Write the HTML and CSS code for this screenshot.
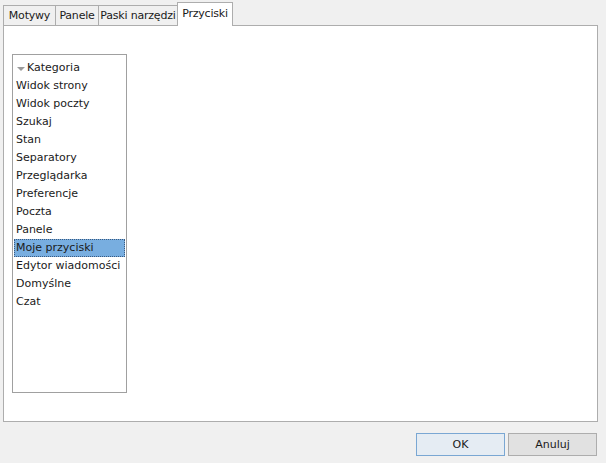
FILE: index.html
```html
<!DOCTYPE html>
<html>
<head>
<meta charset="utf-8">
<link rel="stylesheet" href="styles.css">
</head>
<body>
<div class="dialog">
  <div class="tabs">
    <div class="tab t1">Motywy</div>
    <div class="tab t2">Panele</div>
    <div class="tab t3">Paski narzędzi</div>
    <div class="tab t4 active">Przyciski</div>
  </div>
  <div class="panel">
    <div class="list">
      <div class="row head"><span class="tri"></span>Kategoria</div>
      <div class="row">Widok strony</div>
      <div class="row">Widok poczty</div>
      <div class="row">Szukaj</div>
      <div class="row">Stan</div>
      <div class="row">Separatory</div>
      <div class="row">Przeglądarka</div>
      <div class="row">Preferencje</div>
      <div class="row">Poczta</div>
      <div class="row">Panele</div>
      <div class="row sel">Moje przyciski</div>
      <div class="row">Edytor wiadomości</div>
      <div class="row">Domyślne</div>
      <div class="row">Czat</div>
    </div>
  </div>
  <div class="buttons">
    <div class="btn default">OK</div>
    <div class="btn">Anuluj</div>
  </div>
</div>
</body>
</html>
```
FILE: styles.css
```css
html, body {
  margin: 0;
  padding: 0;
  background: #f0f0f0;
  width: 606px;
  height: 463px;
  overflow: hidden;
}
.dialog {
  font-family: "DejaVu Sans", sans-serif;
  font-size: 11px;
  color: #1a1a1a;
  padding: 1px 8px 0 3px;
}
.tabs {
  display: flex;
  align-items: flex-end;
  height: 24px;
  position: relative;
  z-index: 1;
}
.tab {
  height: 20px;
  line-height: 19px;
  text-align: center;
  border: 1px solid #adadad;
  border-bottom: none;
  background: #f0f0f0;
  margin-right: -1px;
  box-sizing: border-box;
  white-space: nowrap;
  letter-spacing: -0.2px;
}
.t1 { width: 53px; }
.t2 { width: 44px; }
.t3 { width: 80px; }
.t4 { width: 56px; }
.tab.active {
  background: #fff;
  height: 24px;
  line-height: 22px;
  margin-bottom: -1px;
}
.panel {
  height: 397px;
  box-sizing: border-box;
  border: 1px solid #adadad;
  background: #fff;
  padding: 28px 0 0 8px;
}
.list {
  width: 115px;
  height: 339px;
  box-sizing: border-box;
  border: 1px solid #a0a0a0;
  padding: 4px 1px 0 1px;
}
.row {
  height: 18px;
  line-height: 18px;
  padding-left: 2px;
  white-space: nowrap;
}
.head {
  display: flex;
  align-items: center;
}
.tri {
  width: 0;
  height: 0;
  border-left: 4px solid transparent;
  border-right: 4px solid transparent;
  border-top: 4px solid #9a9a9a;
  margin: 1px 2px 0 1px;
}
.sel {
  background: #78aee0;
  outline: 1px dotted #3a5a80;
  outline-offset: -1px;
}
.buttons {
  display: flex;
  justify-content: flex-end;
  gap: 3px;
  margin-top: 11px;
  padding-right: 1px;
}
.btn {
  width: 89px;
  height: 23px;
  box-sizing: border-box;
  border: 1px solid #adadad;
  background: #e1e1e1;
  text-align: center;
  line-height: 21px;
}
.btn.default {
  border-color: #7aa7d3;
  background: #e5ecf3;
}
```
